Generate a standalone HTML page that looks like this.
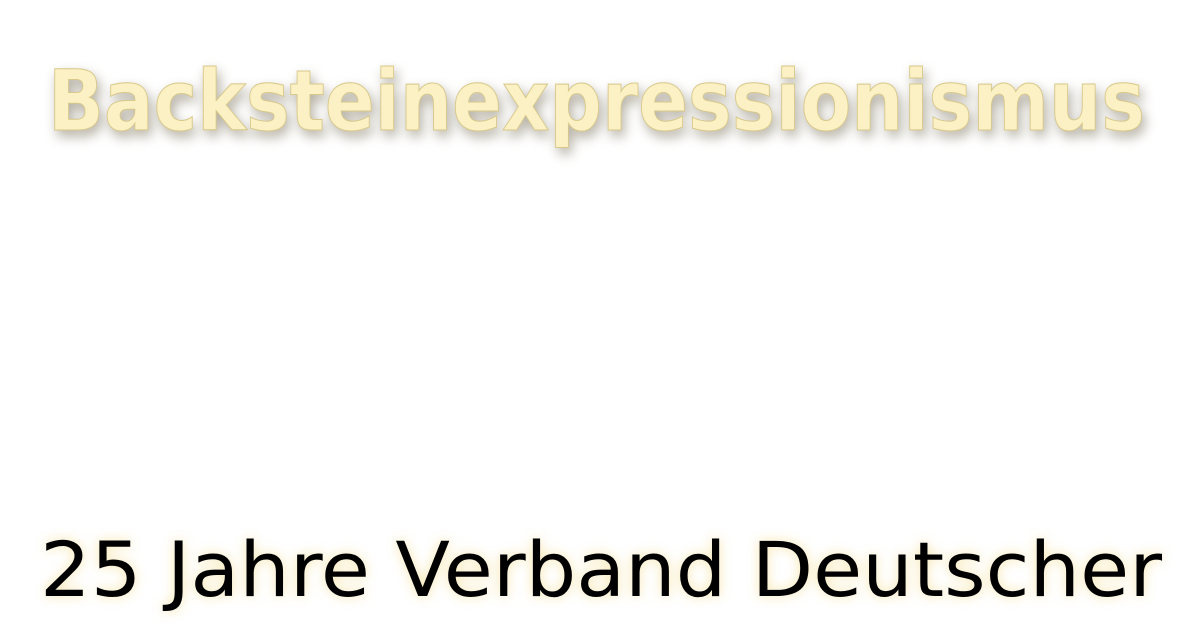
<!DOCTYPE html>
<html><head><meta charset="utf-8"><style>
html,body{margin:0;padding:0;background:#fff;width:1200px;height:630px;overflow:hidden}
svg{display:block}
</style></head><body>
<svg width="1200" height="630" viewBox="0 0 1200 630" xmlns="http://www.w3.org/2000/svg">
<g style="filter:drop-shadow(3px 6px 6px rgba(90,80,50,0.45))">
<text x="48" y="130" font-family="DejaVu Sans, sans-serif" font-weight="bold" font-size="84" fill="#fbf1c4" stroke="#d8c88a" stroke-width="1" textLength="1097" lengthAdjust="spacingAndGlyphs">Backsteinexpressionismus</text>
</g>
<g style="filter:drop-shadow(0 0 6px rgba(245,225,160,0.9))">
<text x="40" y="596" font-family="DejaVu Sans, sans-serif" font-size="76" fill="#000" textLength="1122" lengthAdjust="spacingAndGlyphs">25 Jahre Verband Deutscher</text>
</g>
</svg>
</body></html>
